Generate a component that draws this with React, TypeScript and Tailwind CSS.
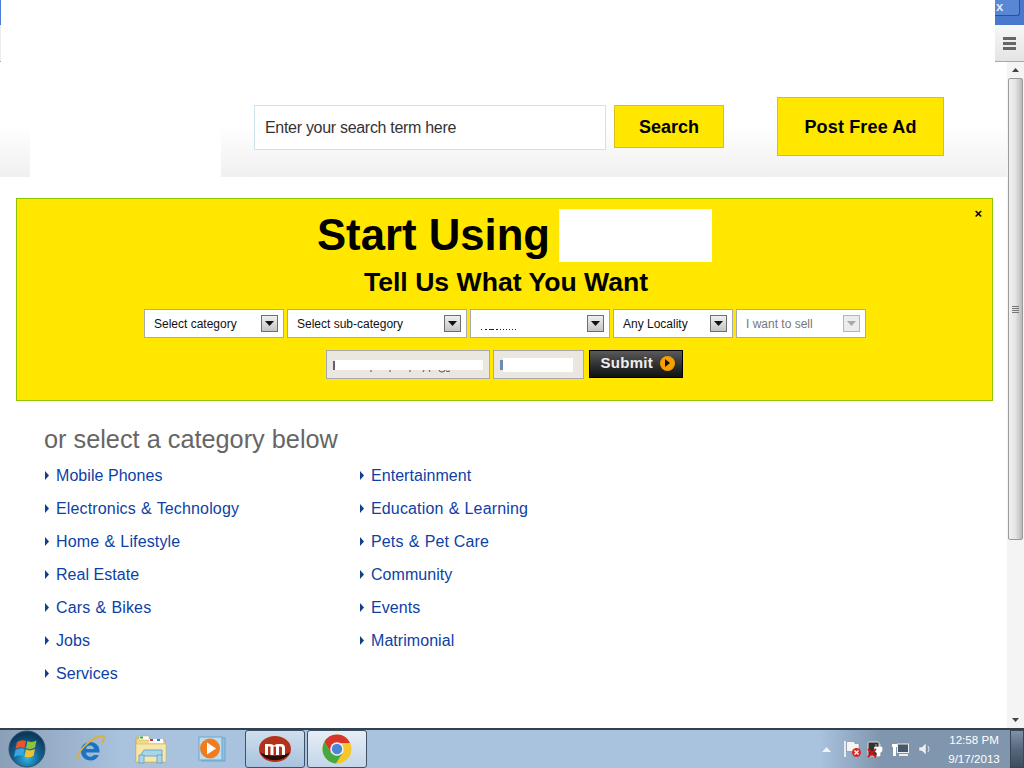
import React from "react";

const Caret = ({ disabled }: { disabled?: boolean }) => (
  <span className={`flex items-center justify-center w-[17px] h-[17px] border ${disabled ? "border-[#b5b5b5] bg-[#ececec]" : "border-[#6e6e6e] bg-gradient-to-b from-[#f0f0f0] to-[#c4c4c4]"}`}>
    <svg width="9" height="5" viewBox="0 0 9 5"><path d="M0 0h9L4.500 5z" fill={disabled ? "#a8a8a8" : "#111"} /></svg>
  </span>
);

const Select = ({ label, w, disabled, children }: { label?: string; w: string; disabled?: boolean; children?: React.ReactNode }) => (
  <div className={`${w} h-[29px] bg-white border border-[#a9a9b0] flex items-center justify-between pl-[9px] pr-[5px] text-[12px] ${disabled ? "text-[#777]" : "text-[#111]"}`}>
    {children ?? <span>{label}</span>}
    <Caret disabled={disabled} />
  </div>
);

const Cat = ({ t }: { t: string }) => {
  const parts = t.split(" & ");
  return (
    <li className="h-[33px] flex items-center gap-[7px] text-[16px] text-[#0d3fa6]">
      <svg width="4" height="9" viewBox="0 0 4 9" className="shrink-0"><path d="M0 0l4 4.500L0 9z" fill="#123f8c" /></svg>
      {parts.length === 2 ? (
        <span className="tracking-[0.15px]">{parts[0]} <span className="mx-[0.5px]">&amp;</span> {parts[1]}</span>
      ) : (
        <span className="tracking-[0.05px]">{t}</span>
      )}
    </li>
  );
};

const Windows = () => (
  <svg width="38" height="38" viewBox="0 0 38 38">
    <defs>
      <radialGradient id="orb" cx="50%" cy="75%" r="65%"><stop offset="0" stopColor="#2fb6e8" /><stop offset="0.55" stopColor="#14608f" /><stop offset="1" stopColor="#0d3a5c" /></radialGradient>
    </defs>
    <circle cx="19" cy="19" r="18" fill="url(#orb)" stroke="#31526e" />
    <path d="M9 12q5-3 9-1l-1.500 7q-4-2-9 1z" fill="#e8562a" />
    <path d="M19.500 11q5 2 9-.5l-1.500 7q-4 2.500-9 .5z" fill="#8cc43c" />
    <path d="M7.500 20q5-3 9-1l-1.500 7q-4-2-9 1z" fill="#3ba5e0" />
    <path d="M18 19.500q5 2 9-.5l-1.500 7q-4 2.500-9 .5z" fill="#f4c02c" />
  </svg>
);

const IE = () => (
  <svg width="32" height="32" viewBox="0 0 32 32">
    <path d="M16 9c-5 0-9 3.500-9 9s4 9.500 9.500 9.500c4 0 7-2 8.300-5.500h-5c-.8 1.200-2 1.800-3.400 1.800-2.500 0-4.300-1.700-4.400-4.300H25.500C26 12.500 21.500 9 16 9zm-4 7c.3-2 1.900-3.400 4-3.400s3.700 1.400 4 3.400z" fill="#1a74c4" />
    <path d="M4 27C1 22 14 6 27 3c3.500-.8 4 2 1.500 7" fill="none" stroke="#e0b030" strokeWidth="1.800" />
  </svg>
);

const Folder = () => (
  <svg width="32" height="30" viewBox="0 0 32 30">
    <path d="M1 4h12l2 2h15v22H1z" fill="#f2d98a" stroke="#c9a85c" />
    <rect x="4" y="2" width="10" height="4" fill="#fff" stroke="#c9a85c" strokeWidth=".5" />
    <rect x="5" y="2.500" width="3" height="2" fill="#3bab3b" />
    <rect x="14" y="5" width="14" height="4" fill="#fff" />
    <rect x="15" y="5" width="3" height="2" fill="#d0342c" />
    <rect x="22" y="5" width="3" height="2" fill="#2a7fd0" />
    <path d="M1 10h30v18H1z" fill="#f8e8a8" stroke="#c9a85c" strokeWidth=".5" />
    <path d="M5 22h22v-6H9z" fill="#a8d4ec" stroke="#6aa8cc" />
    <path d="M4 21h5v8H4zM22 21h5v8h-5z" fill="#a8d4ec" stroke="#6aa8cc" />
  </svg>
);

const Media = () => (
  <svg width="28" height="26" viewBox="0 0 28 26">
    <rect x="4" y="2" width="23" height="23" fill="#8fc0e0" stroke="#6fa5cc" />
    <rect x="1" y="1" width="23" height="23" fill="#bcdcf0" stroke="#6fa5cc" />
    <circle cx="12" cy="12.500" r="10" fill="#f07c1e" />
    <path d="M9 6.500l9 6-9 6z" fill="#fff" />
  </svg>
);

const Moboom = () => (
  <svg width="32" height="26" viewBox="0 0 32 26">
    <ellipse cx="16" cy="13" rx="16" ry="13" fill="#b5321a" />
    <path d="M1 16c5 11 25 11 30 0-6 5-24 5-30 0z" fill="#2a0d06" />
    <path d="M6 19V8h5q3 0 4 1.500Q16 8 19 8h3q4 0 4 4v7h-3v-7q0-1.500-1.500-1.500H20V19h-3v-8.500h-2.500V19h-3v-8.500H9V19z" fill="#fff" />
  </svg>
);

const Chrome = () => (
  <svg width="30" height="30" viewBox="0 0 30 30">
    <circle cx="15" cy="15" r="14.500" fill="#f4c82c" />
    <path d="M15 .5A14.500 14.500 0 0 0 2.400 7.800L8.800 18.500 15 9h13A14.500 14.500 0 0 0 15 .5z" fill="#d8362a" />
    <path d="M2.400 7.800A14.500 14.500 0 0 0 14 29.500L20.500 19 8.800 18.500z" fill="#45a845" />
    <circle cx="15" cy="15" r="6.800" fill="#f2f2f2" />
    <circle cx="15" cy="15" r="5.200" fill="#4a86d8" />
  </svg>
);

const Tray = () => (
  <div className="flex items-center h-full">
    <svg width="9" height="5" viewBox="0 0 9 5"><path d="M0 5l4.500-5L9 5z" fill="#f2f2f2" /></svg>
    <svg width="18" height="18" viewBox="0 0 18 18" className="ml-[13px]">
      <path d="M1 1v16" stroke="#fff" strokeWidth="1.500" />
      <path d="M2.500 1.500H10l1 2h4v8H2.500z" fill="#f5f5f5" stroke="#777" strokeWidth=".5" />
      <circle cx="12.500" cy="12.500" r="4.500" fill="#d42a2a" />
      <path d="M10.500 10.500l4 4m0-4l-4 4" stroke="#fff" strokeWidth="1.300" />
    </svg>
    <svg width="18" height="18" viewBox="0 0 18 18" className="ml-[5px]">
      <rect x="1" y="2" width="11" height="14" rx="1" fill="#333" stroke="#ddd" />
      <path d="M9 4v3M13 4v3M7.500 7h7.500v4l-2 2v3h-3v-3l-2.500-2z" fill="#fff" stroke="#fff" strokeWidth=".6" />
      <path d="M1 9l8 8m0-8l-8 8" stroke="#e01010" strokeWidth="1.800" />
    </svg>
    <svg width="18" height="16" viewBox="0 0 18 16" className="ml-[6px]">
      <path d="M2 0v3M5 0v3M1 3h5v3H5v9H2V6H1z" fill="#fff" />
      <rect x="6.500" y="3" width="11" height="8.500" fill="#46586a" stroke="#eee" />
      <path d="M8 14h9" stroke="#eee" strokeWidth="2" />
    </svg>
    <svg width="14" height="14" viewBox="0 0 14 14" className="ml-[9px]">
      <path d="M1 5h3l4-4v12L4 9H1z" fill="#eee" stroke="#778" strokeWidth=".4" />
      <path d="M10 4q2 3 0 6" fill="none" stroke="#dde" />
    </svg>
    <div className="ml-[12px] w-[60px] flex flex-col items-center text-[11.6px] leading-[19px] text-white">
      <span>12:58 PM</span>
      <span>9/17/2013</span>
    </div>
    <div className="ml-[6px] w-[14px] h-full border border-[#3a4654] bg-gradient-to-b from-[#7f93a8] via-[#56687c] to-[#3e4e60]" />
  </div>
);

export default function App() {
  return (
    <div className="w-[1024px] h-[768px] flex flex-col overflow-hidden bg-white font-['Liberation_Sans',Arial,sans-serif]">
      {/* browser chrome sliver */}
      <div className="h-[62px] flex shrink-0">
        <div className="w-px flex flex-col">
          <div className="h-[25px] bg-[#4c7fd4]" />
          <div className="h-[36px] bg-[#ececec]" />
          <div className="h-px bg-[#a0a0a0]" />
        </div>
        <div className="flex-1" />
        <div className="w-[29px] flex flex-col">
          <div className="h-[25px] bg-[#4a78cc] flex">
            <div className="w-[25px] h-[16px] bg-[#5a86d6] border-b border-r border-[#2e4f90] rounded-br-[3px] text-[13px] leading-[14px] font-bold text-[#dfe8f8] pl-[1px]">x</div>
          </div>
          <div className="flex-1 bg-gradient-to-b from-[#f7f7f7] to-[#e4e4e4] border-b border-[#a8a8a8] flex items-center justify-center">
            <div className="flex flex-col gap-[2px]">
              <div className="w-[13px] h-[3px] bg-[#666]" />
              <div className="w-[13px] h-[3px] bg-[#666]" />
              <div className="w-[13px] h-[3px] bg-[#666]" />
            </div>
          </div>
        </div>
      </div>

      <div className="flex-1 flex min-h-0">
        <div className="w-[1007px] flex flex-col">
          {/* header */}
          <div className="h-[115px] flex bg-gradient-to-b from-white from-[55%] to-[#f0f0f0]">
            <div className="ml-[30px] w-[191px] h-full bg-white" />
            <div className="ml-[33px] mt-[43px] w-[352px] h-[45px] border border-[#cfe3ef] bg-white flex items-center pl-[10px] text-[16px] tracking-[-0.3px] text-[#333]">Enter your search term here</div>
            <div className="ml-[8px] mt-[43px] w-[110px] h-[43px] pt-[2px] bg-[#ffe700] border border-[#d8bf20] flex items-center justify-center text-[18px] font-bold text-black">Search</div>
            <div className="ml-[53px] mt-[35px] w-[167px] h-[59px] pt-[2px] bg-[#ffe700] border border-[#d8bf20] flex items-center justify-center text-[18px] tracking-[0.15px] font-bold text-black">Post Free Ad</div>
          </div>

          {/* yellow banner */}
          <div className="relative ml-[16px] mt-[21px] w-[977px] h-[203px] bg-[#ffe700] border border-[#8fc400] flex flex-col items-center">
            <div className="absolute right-[10px] top-[8px] text-[13px] leading-[13px] font-bold text-black">×</div>
            <div className="mt-[10px] flex items-center h-[53px] ml-[20px]">
              <span className="text-[43.7px] leading-[53px] font-bold text-black mt-[-2px]">Start Using</span>
              <div className="ml-[9px] w-[153px] h-[53px] bg-white" />
            </div>
            <div className="mt-[4px] ml-[3px] text-[26.6px] leading-[32px] font-bold text-black">Tell Us What You Want</div>
            <div className="mt-[11px] flex gap-[3px] ml-[1px]">
              <Select w="w-[140px]" label="Select category" />
              <Select w="w-[180px]" label="Select sub-category" />
              <Select w="w-[140px]">
                <svg width="42" height="14" viewBox="0 0 42 14" className="mt-[2px]">
                  <path d="M1 11.500h1M5 11.500h2M9 11.500h5M16 11.500h2M20 11.500h1M23 11.500h1M26 11.500h1M29 11.500h1M32 11.500h1M35 11.500h1" stroke="#222" strokeWidth="1" />
                </svg>
              </Select>
              <Select w="w-[120px]" label="Any Locality" />
              <Select w="w-[130px]" label="I want to sell" disabled />
            </div>
            <div className="mt-[12px] flex ml-[-1px] items-start">
              <div className="w-[164px] h-[29px] bg-[#e9e7e0] border border-[#a9a9b0] flex items-center pl-[6px]">
                <svg width="152" height="13" viewBox="0 0 152 13" className="mt-[3px]">
                  <rect x="0" y="1" width="2" height="9" fill="#6a5a80" />
                  <rect x="2" y="0" width="148" height="10" fill="#fff" />
                  <path d="M38 10v2M57 10v2M77 10v2M91 10l-1 2M96 10l1 2" stroke="#555" strokeWidth="1" />
                  <path d="M106 10q0 2 3 2t3-2M113 11q2 1 4 0" fill="none" stroke="#555" strokeWidth="1" />
                </svg>
              </div>
              <div className="ml-[3px] w-[91px] h-[29px] bg-[#e9e7e0] border border-[#a9a9b0] flex items-center pl-[6px]">
                <svg width="73" height="14" viewBox="0 0 73 14">
                  <rect x="0" y="2" width="3" height="10" fill="#6b8cb0" />
                  <rect x="3" y="0" width="70" height="14" fill="#fff" />
                </svg>
              </div>
              <div className="ml-[5px] w-[94px] h-[28px] pb-[2px] bg-gradient-to-b from-[#5a5a5a] to-[#111] border border-black flex items-center pl-[11px] gap-[7px]">
                <span className="text-[15px] font-bold text-[#eee] tracking-[0.3px]">Submit</span>
                <span className="w-[15px] h-[15px] rounded-full bg-[#f5a000] flex items-center justify-center">
                  <svg width="5" height="8" viewBox="0 0 5 8"><path d="M0 0l5 4-5 4z" fill="#111" /></svg>
                </span>
              </div>
            </div>
          </div>

          {/* categories */}
          <div className="ml-[44px] mt-[24px] text-[25.3px] leading-[28px] text-[#666]">or select a category below</div>
          <div className="ml-[45px] mt-[6px] flex">
            <ul className="w-[315px]">
              {["Mobile Phones", "Electronics & Technology", "Home & Lifestyle", "Real Estate", "Cars & Bikes", "Jobs", "Services"].map((t) => <Cat key={t} t={t} />)}
            </ul>
            <ul>
              {["Entertainment", "Education & Learning", "Pets & Pet Care", "Community", "Events", "Matrimonial"].map((t) => <Cat key={t} t={t} />)}
            </ul>
          </div>
        </div>

        {/* scrollbar */}
        <div className="w-[17px] bg-[#f4f4f4] flex flex-col items-center">
          <div className="h-[16px] flex items-center justify-center">
            <svg width="7" height="4" viewBox="0 0 7 4"><path d="M0 4l3.500-4L7 4z" fill="#444" /></svg>
          </div>
          <div className="w-[15px] h-[462px] rounded-[2px] border border-[#9a9a9a] bg-gradient-to-r from-[#f0f0f0] via-[#e4e4e4] to-[#b8b8b8] flex flex-col items-center justify-center gap-px">
            <div className="w-[7px] h-px bg-[#777]" />
            <div className="w-[7px] h-px bg-[#777]" />
            <div className="w-[7px] h-px bg-[#777]" />
            <div className="w-[7px] h-px bg-[#777]" />
          </div>
          <div className="flex-1" />
          <div className="h-[16px] flex items-center justify-center">
            <svg width="7" height="4" viewBox="0 0 7 4"><path d="M0 0l3.500 4L7 0z" fill="#444" /></svg>
          </div>
        </div>
      </div>

      {/* taskbar */}
      <div className="h-[40px] shrink-0 flex items-center border-t-2 border-[#33414f] bg-gradient-to-r from-[#8aa0b8] via-[#a9c2de] via-[12%] to-[#a9c2de]">
        <div className="flex items-center h-full flex-1 bg-gradient-to-r from-transparent from-[80%] to-[#7f96ae] to-[86%]">
          <div className="ml-[8px] w-[38px] flex justify-center"><Windows /></div>
          <div className="ml-[28px] w-[32px] flex justify-center"><IE /></div>
          <div className="ml-[29px] w-[32px] flex justify-center"><Folder /></div>
          <div className="ml-[31px] w-[28px] flex justify-center"><Media /></div>
          <div className="ml-[19px] w-[60px] h-full rounded-[3px] border border-[#3f5164] bg-gradient-to-b from-[#cfdfee] to-[#a9c2de] flex items-center justify-center"><Moboom /></div>
          <div className="ml-[2px] w-[60px] h-full rounded-[3px] border border-[#3f5164] bg-gradient-to-b from-[#e6eef6] to-[#c4d6e8] flex items-center justify-center"><Chrome /></div>
          <div className="flex-1" />
          <Tray />
        </div>
      </div>
    </div>
  );
}
